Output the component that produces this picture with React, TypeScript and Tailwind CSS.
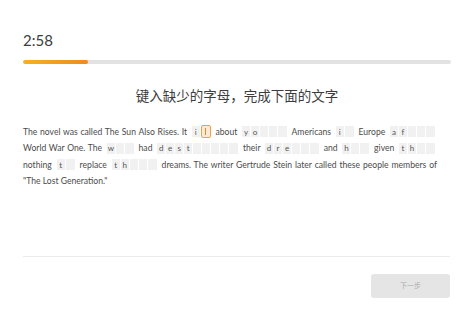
import React from 'react';

type Part = string | { letters: string[]; cells: number; active?: number };

const lines: Part[][] = [
  [
    'The novel was called The Sun Also Rises. It',
    { letters: ['i'], cells: 2, active: 1 },
    'about',
    { letters: ['y', 'o'], cells: 5 },
    'Americans',
    { letters: ['i'], cells: 2 },
    'Europe',
    { letters: ['a', 'f'], cells: 5 },
  ],
  [
    'World War One. The',
    { letters: ['w'], cells: 3 },
    'had',
    { letters: ['d', 'e', 's', 't'], cells: 9 },
    'their',
    { letters: ['d', 'r', 'e'], cells: 6 },
    'and',
    { letters: ['h'], cells: 3 },
    'given',
    { letters: ['t', 'h'], cells: 4 },
  ],
  [
    'nothing',
    { letters: ['t'], cells: 2 },
    'replace',
    { letters: ['t', 'h'], cells: 5 },
    'dreams. The writer Gertrude Stein later called these people members of',
  ],
];

const Blank = ({ letters, cells, active }: { letters: string[]; cells: number; active?: number }) => (
  <span className="inline-flex align-middle mx-[2px] -mt-[2px]">
    {Array.from({ length: cells }).map((_, i) =>
      i === active ? (
        <span
          key={i}
          className="inline-block w-[10px] h-[13px] -my-[1px] border border-[#f0a24a] rounded-[2px] bg-[#fbe9d6] relative"
        >
          <span className="absolute left-[3px] top-[2px] w-px h-[7px] bg-[#e08a2e]" />
        </span>
      ) : (
        <span
          key={i}
          className="inline-flex items-center justify-center w-[9px] h-[11px] bg-[#f1f1f1] border-r border-white last:border-r-0 text-[8px] leading-none text-[#555]"
        >
          {letters[i] || ''}
        </span>
      )
    )}
  </span>
);

export default function App() {
  return (
    <div className="w-[474px] h-[316px] bg-white font-['Lato','Noto_Sans_CJK_SC',sans-serif] text-[#3c3c3c]">
      <div className="px-[23px] pt-[30px]">
        <div className="text-[15px] leading-[20px] text-[#3c3c3c]">2:58</div>
        <div className="mt-[10px] h-[4px] w-[428px] rounded-full bg-[#e2e2e2] overflow-hidden">
          <div className="h-full w-[65px] rounded-full bg-gradient-to-r from-[#f5b21f] to-[#ee8a22]" />
        </div>
        <div className="mt-[21px] text-center text-[13.5px] leading-[20px] text-[#3c3c3c] font-['Noto_Sans_CJK_SC',sans-serif]">
          键入缺少的字母，完成下面的文字
        </div>
        <div className="mt-[19px] w-[414px] text-[8.6px] leading-[16.4px] text-[#4b4b4b]">
          {lines.map((line, li) => (
            <div key={li} className="text-justify [text-align-last:justify] whitespace-nowrap">
              {line.map((p, pi) => (
                <React.Fragment key={pi}>
                  {pi > 0 ? ' ' : ''}
                  {typeof p === 'string' ? p : <Blank {...p} />}
                </React.Fragment>
              ))}
            </div>
          ))}
          <div>"The Lost Generation."</div>
        </div>
        <div className="mt-[66px] h-px w-[427px] bg-[#ececec]" />
        <div className="mt-[17px] flex justify-end pr-[1px]">
          <button className="w-[79px] h-[24px] rounded-[3px] bg-[#e5e5e5] text-[7px] text-[#afafaf] font-['Noto_Sans_CJK_SC',sans-serif]">
            下一步
          </button>
        </div>
      </div>
    </div>
  );
}
